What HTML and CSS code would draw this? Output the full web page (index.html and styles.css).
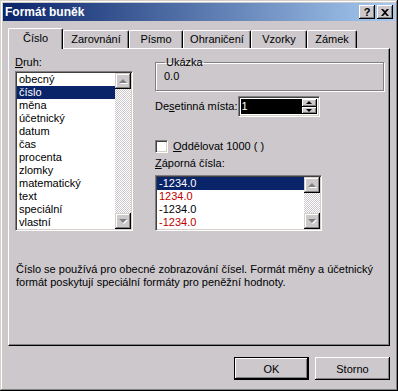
FILE: index.html
```html
<!DOCTYPE html>
<html lang="cs">
<head>
<meta charset="UTF-8">
<title>Formát buněk</title>
<link rel="stylesheet" href="styles.css">
</head>
<body>
<div class="window">
    <div class="titlebar">
        <span class="title">Formát buněk</span>
        <div class="title-btns">
            <span class="tbtn help">?</span>
            <span class="tbtn close">
                <svg width="8" height="7" viewBox="0 0 8 7"><path d="M0 0h2l2 2 2-2h2L5 3.5 8 7H6L4 5 2 7H0l3-3.5z" fill="#000"/></svg>
            </span>
        </div>
    </div>

    <div class="body">
        <div class="tabs">
            <span class="tab active" style="width:55px">Číslo</span>
            <span class="tab" style="width:66px">Zarovnání</span>
            <span class="tab" style="width:54px">Písmo</span>
            <span class="tab" style="width:68px">Ohraničení</span>
            <span class="tab" style="width:56px">Vzorky</span>
            <span class="tab" style="width:50px">Zámek</span>
        </div>

        <div class="panel">
            <div class="col-left">
                <div class="lbl"><u>D</u>ruh:</div>
                <div class="listbox kinds">
                    <ul class="items">
                        <li>obecný</li>
                        <li class="sel">číslo</li>
                        <li>měna</li>
                        <li>účetnický</li>
                        <li>datum</li>
                        <li>čas</li>
                        <li>procenta</li>
                        <li>zlomky</li>
                        <li>matematický</li>
                        <li>text</li>
                        <li>speciální</li>
                        <li>vlastní</li>
                    </ul>
                    <div class="scrollbar">
                        <span class="sbtn"><i class="arrow up"></i></span>
                        <span class="track"></span>
                        <span class="sbtn"><i class="arrow down"></i></span>
                    </div>
                </div>
            </div>

            <div class="col-right">
                <fieldset class="group">
                    <legend>Ukázka</legend>
                    <div class="sample">0.0</div>
                </fieldset>

                <div class="decimals">
                    <span class="lbl">De<u>s</u>etinná místa:</span>
                    <div class="spin">
                        <span class="spin-val">1</span>
                        <div class="spin-btns">
                            <span class="spbtn"><i class="tri up"></i></span>
                            <span class="spbtn"><i class="tri down"></i></span>
                        </div>
                    </div>
                </div>

                <div class="check">
                    <span class="box"></span>
                    <span class="lbl"><u>O</u>ddělovat 1000 ( )</span>
                </div>

                <div class="lbl neg-lbl"><u>Z</u>áporná čísla:</div>
                <div class="listbox neg">
                    <ul class="items">
                        <li class="sel">-1234.0</li>
                        <li class="red">1234.0</li>
                        <li>-1234.0</li>
                        <li class="red">-1234.0</li>
                    </ul>
                    <div class="scrollbar">
                        <span class="sbtn"><i class="arrow up"></i></span>
                        <span class="track"></span>
                        <span class="sbtn"><i class="arrow down"></i></span>
                    </div>
                </div>
            </div>

            <p class="desc">Číslo se používá pro obecné zobrazování čísel. Formát měny a účetnický formát poskytují speciální formáty pro peněžní hodnoty.</p>
        </div>

        <div class="footer">
            <span class="btn default">OK</span>
            <span class="btn">Storno</span>
        </div>
    </div>
</div>
</body>
</html>
```

FILE: styles.css
```css
/* Formát buněk - dialog */
body {
    margin: 0;
    font-family: "Liberation Sans", Arial, sans-serif;
    font-size: 11px;
    color: #000;
}

.window {
    width: 398px;
    height: 391px;
    box-sizing: border-box;
    padding: 3px;
    background: #ccc8cc;
    box-shadow: inset -1px -1px #000, inset 1px 1px #d4d0c8, inset -2px -2px #808080, inset 2px 2px #fff;
}

.titlebar {
    height: 18px;
    display: flex;
    align-items: center;
    justify-content: space-between;
    padding: 0 2px 0 2px;
    background: linear-gradient(to right, #0a246a, #a6caf0);
}

.title {
    color: #fff;
    font-weight: bold;
    font-size: 12px;
}

.title-btns {
    display: flex;
    gap: 2px;
}

.tbtn {
    width: 16px;
    height: 14px;
    box-sizing: border-box;
    display: flex;
    align-items: center;
    justify-content: center;
    background: #ccc8cc;
    box-shadow: inset -1px -1px #000, inset 1px 1px #fff, inset -2px -2px #808080;
    font-weight: bold;
    font-size: 11px;
    line-height: 1;
}

.body {
    padding: 7px 5px 0 5px;
}

/* zalozky */
.tabs {
    display: flex;
    align-items: flex-end;
    height: 20px;
    position: relative;
    z-index: 1;
}

.tab {
    height: 18px;
    box-sizing: border-box;
    display: flex;
    align-items: center;
    justify-content: center;
    border-top: 1px solid #fff;
    border-left: 1px solid #fff;
    border-right: 1px solid #000;
    border-radius: 2px 2px 0 0;
    box-shadow: inset -1px 0 #808080;
    padding-bottom: 1px;
}

.tab.active {
    height: 21px;
    margin-bottom: -1px;
    background: #ccc8cc;
    padding-bottom: 2px;
}

.panel {
    height: 298px;
    box-sizing: border-box;
    border: 1px solid;
    border-color: #fff #000 #000 #fff;
    box-shadow: inset -1px -1px #808080;
    padding: 7px 5px 0 6px;
    display: grid;
    grid-template-columns: 118px 1fr;
    grid-template-rows: auto auto;
    column-gap: 22px;
    align-content: start;
}

.lbl {
    line-height: 13px;
    white-space: nowrap;
}

/* seznamy */
.listbox {
    display: flex;
    box-sizing: border-box;
    border: 1px solid;
    border-color: #808080 #fff #fff #808080;
    box-shadow: inset 1px 1px #404040, inset -1px -1px #d4d0c8;
    padding: 1px;
    background: #fff;
    margin-top: 2px;
}

.kinds {
    height: 160px;
}

.neg {
    height: 56px;
    width: 167px;
    margin-top: 5px;
}

.items {
    flex: 1;
    list-style: none;
    margin: 0;
    padding: 0;
    overflow: hidden;
}

.items li {
    height: 13px;
    line-height: 13px;
    padding-left: 2px;
    white-space: nowrap;
}

.items li.sel {
    background: #0a246a;
    color: #fff;
}

.items li.red {
    color: #c00000;
}

.scrollbar {
    width: 16px;
    display: flex;
    flex-direction: column;
}

.sbtn {
    height: 16px;
    flex: none;
    display: flex;
    align-items: center;
    justify-content: center;
    background: #ccc8cc;
    box-shadow: inset -1px -1px #000, inset 1px 1px #d4d0c8, inset -2px -2px #808080, inset 2px 2px #fff;
}

.track {
    flex: 1;
    background: repeating-conic-gradient(#fff 0 25%, #ccc8cc 0 50%) 0 0 / 2px 2px;
}

.arrow {
    width: 0;
    height: 0;
    border-left: 4px solid transparent;
    border-right: 4px solid transparent;
    filter: drop-shadow(1px 1px 0 #fff);
}

.arrow.up {
    border-bottom: 4px solid #808080;
}

.arrow.down {
    border-top: 4px solid #808080;
}

/* pravy sloupec */
.group {
    margin: 0;
    padding: 1px 8px 7px 8px;
    border: 1px solid #808080;
    box-shadow: inset 1px 1px #fff, 1px 1px #fff;
    min-width: 0;
}

.group legend {
    padding: 0 1px;
    line-height: 13px;
    margin-left: 1px;
}

.sample {
    line-height: 13px;
}

.decimals {
    display: flex;
    align-items: center;
    justify-content: space-between;
    width: 164px;
    margin-top: 5px;
}

.spin {
    width: 82px;
    height: 21px;
    flex: none;
    box-sizing: border-box;
    display: flex;
    border: 1px solid;
    border-color: #808080 #fff #fff #808080;
    box-shadow: inset 1px 1px #404040, inset -1px -1px #d4d0c8;
    padding: 2px;
    background: #fff;
}

.spin-val {
    flex: 1;
    background: #000;
    color: #fff;
    line-height: 15px;
    padding-left: 1px;
}

.spin-btns {
    width: 15px;
    display: flex;
    flex-direction: column;
}

.spbtn {
    flex: 1;
    display: flex;
    align-items: center;
    justify-content: center;
    background: #ccc8cc;
    box-shadow: inset -1px -1px #000, inset 1px 1px #fff, inset -2px -2px #808080;
}

.tri {
    width: 0;
    height: 0;
    border-left: 3px solid transparent;
    border-right: 3px solid transparent;
}

.tri.up {
    border-bottom: 3px solid #000;
}

.tri.down {
    border-top: 3px solid #000;
}

.check {
    display: flex;
    align-items: center;
    gap: 5px;
    margin-top: 22px;
    height: 15px;
}

.check .box {
    width: 13px;
    height: 13px;
    box-sizing: border-box;
    background: #fff;
    border: 1px solid;
    border-color: #808080 #fff #fff #808080;
    box-shadow: inset 1px 1px #404040, inset -1px -1px #d4d0c8;
}

.neg-lbl {
    margin-top: 3px;
}

.desc {
    grid-column: 1 / -1;
    margin: 32px 0 0 1px;
    line-height: 13px;
    width: 360px;
}

/* tlacitka */
.footer {
    display: flex;
    justify-content: flex-end;
    gap: 6px;
    padding-top: 11px;
}

.btn {
    width: 75px;
    height: 23px;
    box-sizing: border-box;
    display: flex;
    align-items: center;
    justify-content: center;
    background: #ccc8cc;
    box-shadow: inset -1px -1px #000, inset 1px 1px #fff, inset -2px -2px #808080;
}

.btn.default {
    border: 1px solid #000;
}
```
